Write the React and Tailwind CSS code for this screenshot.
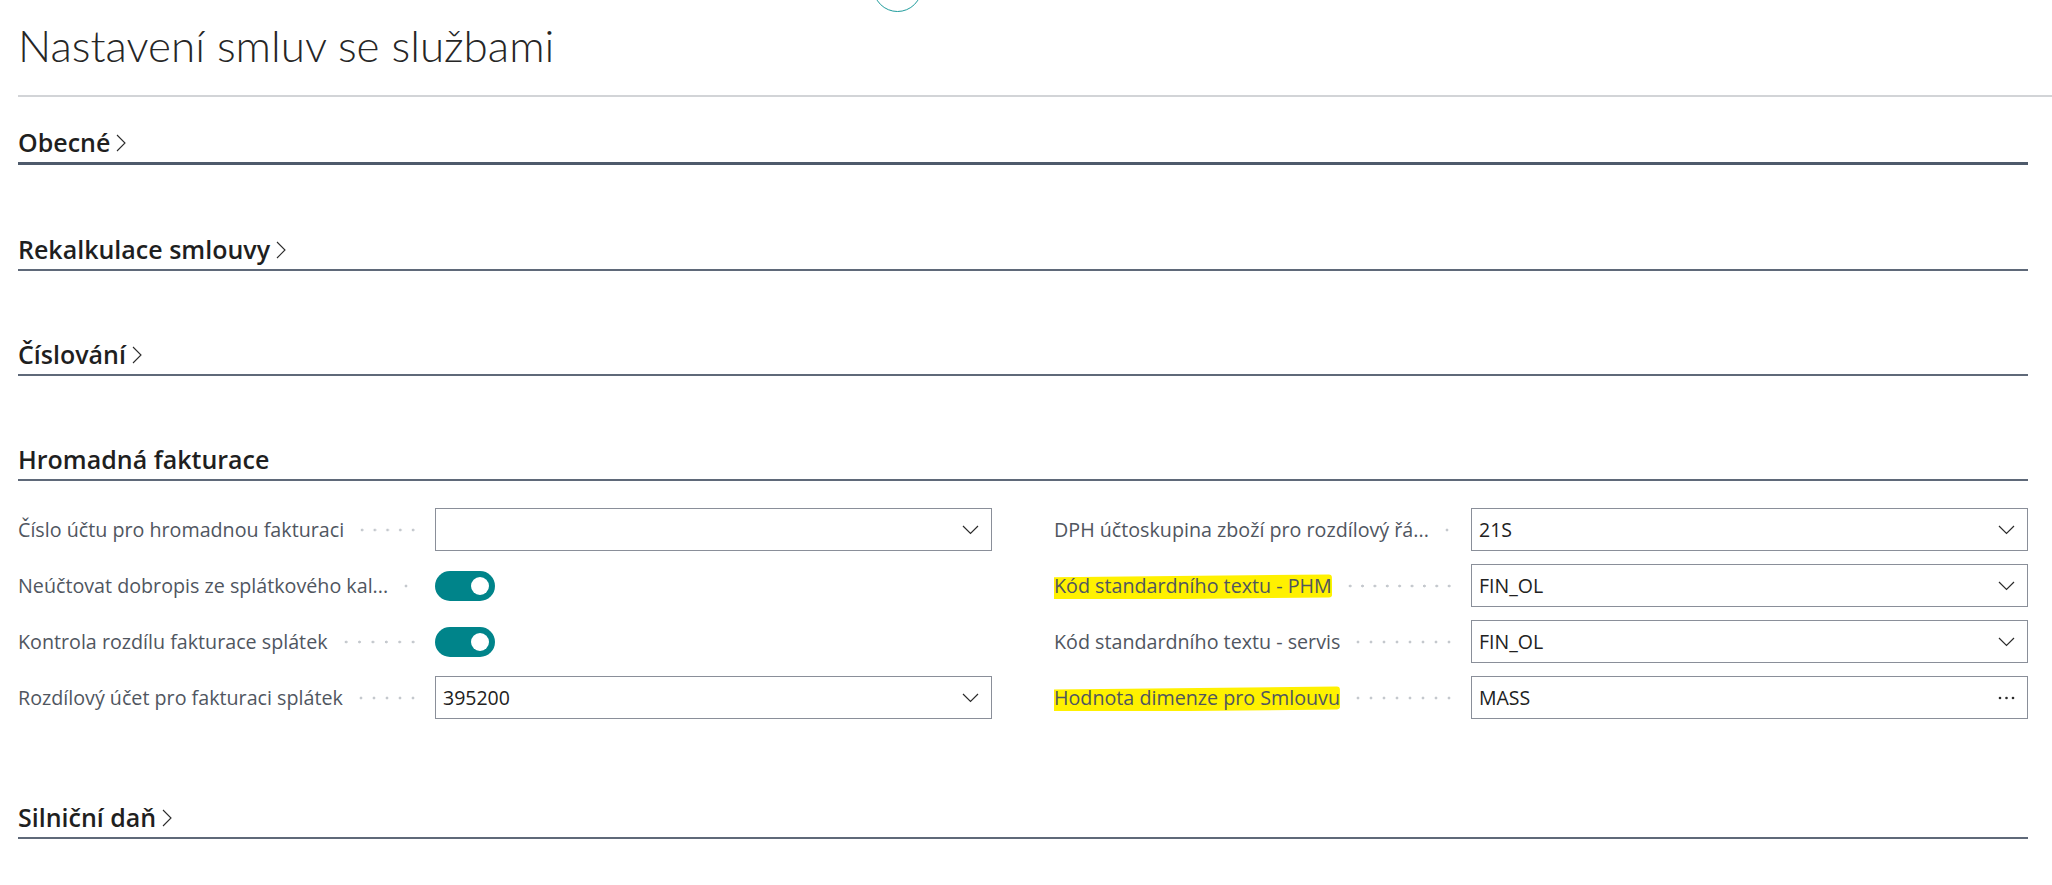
import React from "react";

const ChevronRight = () => (
    <svg width="10" height="18" viewBox="0 0 10 18" fill="none" stroke="#2b2b2b" strokeWidth="1.1" className="ml-1.5 mt-[2px] shrink-0">
        <polyline points="1,1 9,9 1,17" />
    </svg>
);

const ChevronDown = () => (
    <svg width="17" height="10" viewBox="0 0 17 10" fill="none" stroke="#2b2b2b" strokeWidth="1.2" className="shrink-0">
        <polyline points="1,1 8.5,8.5 16,1" />
    </svg>
);

const Dots = () => (
    <svg width="17" height="4" viewBox="0 0 17 4" fill="#2b2b2b" className="shrink-0">
        <circle cx="2" cy="2" r="1.3" />
        <circle cx="8.5" cy="2" r="1.3" />
        <circle cx="15" cy="2" r="1.3" />
    </svg>
);

const SectionHeader = ({ title, collapsed = true, thick = false, className = "" }) => (
    <div className={`${className} ${thick ? "border-b-[3px] border-b-[#4e5a6b]" : "border-b-2 border-b-[#5f6979]"}`}>
        <div className="flex h-[36px] items-start pb-1">
            <h2 className="flex items-center text-[25px] leading-[32px] font-semibold text-[#1f1f1f]">
                {title}
                {collapsed && <ChevronRight />}
            </h2>
        </div>
    </div>
);

const Select = ({ value, lookup }) => (
    <div className="flex h-full flex-1 items-center justify-between border border-[#8a8f99] pl-[7px] pr-[12px]">
        <span className="text-[19.5px] text-[#212121]">{value}</span>
        {lookup ? <Dots /> : <ChevronDown />}
    </div>
);

const Toggle = () => (
    <div className="flex h-[30px] w-[60px] items-center justify-end rounded-full bg-[#00848a] pr-[6px]">
        <div className="size-[18px] rounded-full bg-white" />
    </div>
);

const Field = ({ label, highlight, children }) => (
    <div className="flex h-[43px] items-center">
        <div className="flex w-[417px] shrink-0 items-center pr-4">
            <span className="relative min-w-0 truncate text-[19.7px] leading-[27px] text-[#50565f]">
                {highlight && (
                    <span className="absolute -left-[17px] right-0 top-[4px] bottom-0 -rotate-[0.6deg] rounded-[3px] bg-[#fff100]" />
                )}
                <span className="relative">{label}</span>
            </span>
            <div className="ml-3 h-[4px] min-w-[6px] flex-1 bg-[radial-gradient(circle,#c4c8cd_1.2px,transparent_1.7px)] bg-size-[12px_4px] bg-repeat-space" />
        </div>
        <div className="flex h-full flex-1 items-center">{children}</div>
    </div>
);

export default function App() {
    return (
        <div className="relative min-h-screen overflow-hidden bg-white font-['Open_Sans',sans-serif]">
            {/* floating button peeking from the top */}
            <div className="absolute left-[873px] top-[-37px] size-[49px] rounded-full border-[1.5px] border-[#1f9c9c]" />

            <div className="pl-[18px]">
                <h1 className="h-[72px] pt-[17px] font-['Lato',sans-serif] text-[44px] leading-[56px] font-light text-[#262626]">
                    Nastavení smluv se službami
                </h1>
                <div className="mt-[23px] h-[2px] bg-[#d2d4d7]" />

                <div className="pr-[24px]">
                    <SectionHeader title="Obecné" thick className="mt-[29px]" />
                    <SectionHeader title="Rekalkulace smlouvy" className="mt-[68px]" />
                    <SectionHeader title="Číslování" className="mt-[67px]" />
                    <SectionHeader title="Hromadná fakturace" collapsed={false} className="mt-[67px]" />

                    <div className="mt-[27px] grid grid-cols-2 gap-x-[62px] gap-y-[13px]">
                        <Field label="Číslo účtu pro hromadnou fakturaci">
                            <Select value="" />
                        </Field>
                        <Field label="DPH účtoskupina zboží pro rozdílový řá...">
                            <Select value="21S" />
                        </Field>

                        <Field label="Neúčtovat dobropis ze splátkového kal...">
                            <Toggle />
                        </Field>
                        <Field label="Kód standardního textu - PHM" highlight>
                            <Select value="FIN_OL" />
                        </Field>

                        <Field label="Kontrola rozdílu fakturace splátek">
                            <Toggle />
                        </Field>
                        <Field label="Kód standardního textu - servis">
                            <Select value="FIN_OL" />
                        </Field>

                        <Field label="Rozdílový účet pro fakturaci splátek">
                            <Select value="395200" />
                        </Field>
                        <Field label="Hodnota dimenze pro Smlouvu" highlight>
                            <Select value="MASS" lookup />
                        </Field>
                    </div>

                    <SectionHeader title="Silniční daň" className="mt-[82px]" />
                </div>
            </div>
        </div>
    );
}
